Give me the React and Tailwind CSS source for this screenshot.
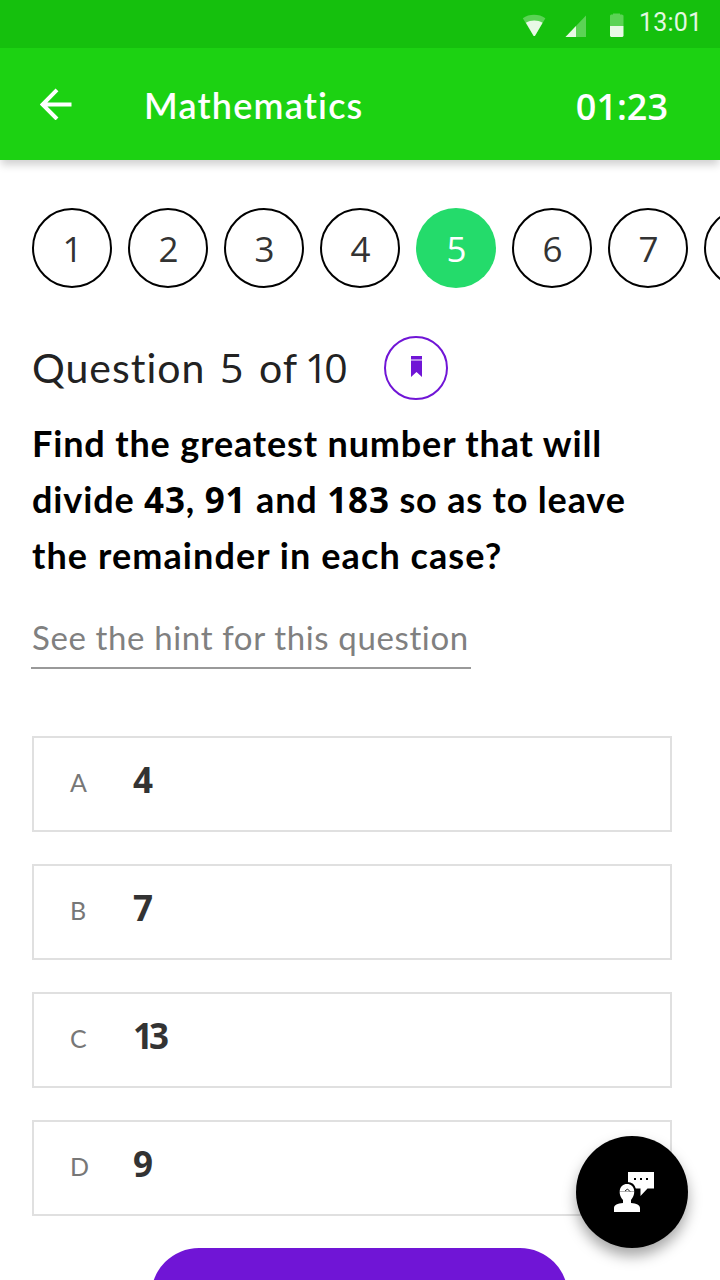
const numbers = ['1', '2', '3', '4', '5', '6', '7', ''];

const options = [
  { letter: 'A', value: '4' },
  { letter: 'B', value: '7' },
  { letter: 'C', value: '13' },
  { letter: 'D', value: '9' },
];

function Digits({ children, className = '' }) {
  return <span className={`font-['Open_Sans',sans-serif] ${className}`}>{children}</span>;
}

function StatusBar() {
  return (
    <div className="flex h-12 items-start bg-[#15c00d] pl-[522px] text-[#e3f8e2]">
      <svg className="mt-3 h-6 w-6" viewBox="0 0 24 24">
        <path d="M12.3 25 .8 6.3C7 1.7 17 1.7 23.4 6.300Z" fill="#5bd355" />
        <path d="M12.300 25 3.900 10.800C9 7.700 15.500 7.700 20.600 10.800Z" fill="#e8f9e6" />
      </svg>
      <svg className="mt-3 ml-[19px] h-[25px] w-[21px]" viewBox="0 0 21 25">
        <path d="M.5 25 21 3.500V25Z" fill="#5bd355" />
        <path d="M.5 25 11 14V25Z" fill="#e8f9e6" />
      </svg>
      <svg className="mt-3 ml-[22px] h-[25px] w-4" viewBox="0 0 16 25">
        <path d="M5 1.500h7v1h2l1.500 1V14H2V3.500l1-1h2Z" fill="#5bd355" />
        <path d="M2 14h13.500v10l-1 1H3l-1-1Z" fill="#e8f9e6" />
      </svg>
      <span className="mt-[9px] ml-[15px] font-['Roboto',sans-serif] text-[25px] leading-[28px] tracking-[0.2px] whitespace-nowrap">13:01</span>
    </div>
  );
}

function Header() {
  return (
    <header className="flex h-28 items-center bg-[#1cd212] pr-[52px] pl-10 text-white">
      <svg className="h-8 w-8" viewBox="0 0 32 32" fill="none" stroke="currentColor" strokeWidth="4">
        <path d="M31.500 16.500H3M17 1.900 2.500 16.500 17 31" />
      </svg>
      <h1 className="ml-[72px] grow pt-0.5 text-[36px] leading-[44px] font-semibold tracking-[1.2px]">Mathematics</h1>
      <Digits className="pt-1.5 text-[36px] leading-[44px] font-semibold">01:23</Digits>
    </header>
  );
}

export default function App() {
  return (
    <div className="relative h-[1280px] w-[720px] overflow-hidden bg-white font-['Lato',sans-serif] text-black">
      <div className="shadow-[0_6px_8px_-1px_rgba(0,0,0,0.18)]">
        <StatusBar />
        <Header />
      </div>

      <main className="px-8 pt-12">
        <nav className="flex gap-4">
          {numbers.map((n, i) => (
            <div
              key={i}
              className={
                n === '5'
                  ? 'flex size-20 shrink-0 items-center justify-center rounded-full bg-[#24db6b] text-white'
                  : 'flex size-20 shrink-0 items-center justify-center rounded-full border-2 border-black text-[#333]'
              }
            >
              <Digits className="pt-0.5 pl-px text-[35px] leading-[44px]">{n}</Digits>
            </div>
          ))}
        </nav>

        <div className="mt-12 flex h-16 items-center">
          <h2 className="mb-[2px] w-[352px] text-[41px] leading-[50px] tracking-[1px] whitespace-nowrap text-[#222]">
            <span className="[word-spacing:3px]">Question <Digits>5</Digits> </span>
            <span className="[word-spacing:-4px]">of <Digits className="tracking-[-4px]">10</Digits></span>
          </h2>
          <div className="flex size-16 items-center justify-center rounded-full border-2 border-[#7015d6]">
            <svg className="mb-1 h-[21px] w-[11px]" viewBox="0 0 11 21" fill="#7015d6">
              <path d="M0 0h11v3.500H0ZM0 4.500h11V21l-5.500-5L0 21Z" />
            </svg>
          </div>
        </div>

        <p className="mt-[15px] h-[169px] text-[36px] leading-[56px] font-bold whitespace-nowrap">
          <span className="block h-14 tracking-[0.85px]">Find the greatest number that will</span>
          <span className="block h-14 tracking-[0.85px]">
            divide <Digits className="text-[35px] leading-[40px]">43</Digits>, <Digits className="text-[35px] leading-[40px]">91</Digits> and{' '}
            <Digits className="text-[35px] leading-[40px]">183</Digits> so as to leave
          </span>
          <span className="block h-14 tracking-[1.08px]">the remainder in each case?</span>
        </p>

        <div className="mt-[31px] -ml-px h-[54px] w-[440px] border-b-2 border-[#999] pl-px text-[33px] leading-[44px] tracking-[0.63px] whitespace-nowrap text-[#808080]">
          See the hint for this question
        </div>

        <div className="mt-[67px] flex flex-col gap-8">
          {options.map((o) => (
            <div key={o.letter} className="flex h-24 w-[640px] items-start border-2 border-[#e0e0e0] pl-9">
              <span className="w-[63px] pt-[22px] text-[25px] leading-[44px] text-[#777]">{o.letter}</span>
              <Digits className="pt-5 text-[35px] leading-[44px] font-bold tracking-[-4px] text-[#333]">{o.value}</Digits>
            </div>
          ))}
        </div>

        <div className="mt-8 ml-[119px] h-24 w-[417px] rounded-full bg-[#7015d6]" />
      </main>

      <div className="absolute top-[1136px] left-[576px] flex size-28 items-center justify-center rounded-full bg-black shadow-[0_8px_14px_rgba(0,0,0,0.35)]">
        <svg className="ml-1 size-10" viewBox="0 0 40 40">
          <path d="M14 0h26v16.500h-6.500L26.500 24V16.500H14Z" fill="#fff" />
          <path d="M20 6h2v2h-2zM26 6h2v2h-2zM32 6h2v2h-2z" fill="#000" />
          <path d="M0 40v-4c0-3 3.500-4.500 9-5v-3C3.500 22 5 12 13 12s9.500 10 4 16v3c5.500.5 9 2 9 5V40Z" fill="#fff" stroke="#000" strokeWidth="4" paintOrder="stroke" />
          <path d="M5.500 19.500H20" fill="none" stroke="#000" strokeWidth=".3" />
          <path d="m11 19 2.500-2 2.500 2.500" fill="none" stroke="#000" strokeWidth=".9" />
        </svg>
      </div>
    </div>
  );
}
